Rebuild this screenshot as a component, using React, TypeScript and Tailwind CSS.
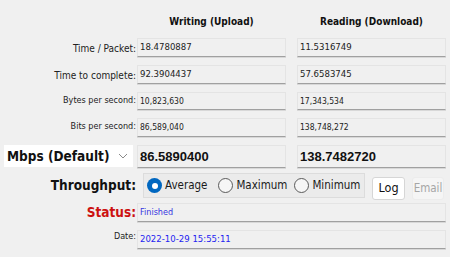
const font = "font-['DejaVu_Sans_Condensed','Liberation_Sans',sans-serif]";

function Field({ children, className = "" }: { children?: React.ReactNode; className?: string }) {
  return (
    <div
      className={`flex items-center w-[149px] h-full bg-[#f0f0f0] border border-[#e4e4e4] border-b-[#a0a0a0] shadow-[0_1px_0_#d8d8d8] pl-[2px] whitespace-nowrap ${className}`}
    >
      {children}
    </div>
  );
}

function Row({
  label,
  a,
  b,
  h,
  small,
}: {
  label: string;
  a: string;
  b: string;
  h: string;
  small?: boolean;
}) {
  const v = small ? "text-[8.5px] text-[#222]" : "text-[9.5px] text-[#222]";
  return (
    <div className={`flex ${h}`}>
      <div className={`w-[137px] text-right pr-[1px] text-[#222] ${small ? "text-[9px] pt-[2px]" : "text-[10px] pt-[3px]"}`}>
        {label}
      </div>
      <Field className={v}>{a}</Field>
      <Field className={`ml-[11px] ${v}`}>{b}</Field>
    </div>
  );
}

function Radio({ label, checked, className = "" }: { label: string; checked?: boolean; className?: string }) {
  return (
    <div className={`flex items-center gap-[3px] ${className}`}>
      {checked ? (
        <div className="w-[15px] h-[15px] rounded-full bg-[#0067c0] flex items-center justify-center">
          <div className="w-[6px] h-[6px] rounded-full bg-white" />
        </div>
      ) : (
        <div className="w-[15px] h-[15px] rounded-full border border-[#5a5a5a] bg-[#f6f6f6]" />
      )}
      <span className="text-[11.5px] text-[#1a1a1a]">{label}</span>
    </div>
  );
}

export default function App() {
  return (
    <div className={`w-[450px] h-[257px] bg-[#f0f0f0] overflow-hidden ${font}`}>
      <div className="flex h-[15px] mt-[14px] text-[10px] font-bold text-[#111]">
        <div className="w-[137px]" />
        <div className="w-[149px] text-center">Writing (Upload)</div>
        <div className="w-[149px] ml-[11px] text-center">Reading (Download)</div>
      </div>

      <div className="flex flex-col mt-[9px] gap-[8px]">
        <Row label="Time / Packet:" a="18.4780887" b="11.5316749" h="h-[19px]" />
        <Row label="Time to complete:" a="92.3904437" b="57.6583745" h="h-[19px]" />
        <Row label="Bytes per second:" a="10,823,630" b="17,343,534" h="h-[18px]" small />
        <Row label="Bits per second:" a="86,589,040" b="138,748,272" h="h-[19px]" small />
      </div>

      <div className="flex h-[23px] mt-[8px]">
        <div className="w-[137px] pl-[4px] pr-[4px]">
          <div className="flex items-center justify-between h-[22px] bg-white pl-[3px] pr-[5px]">
            <span className="text-[13.5px] font-bold text-[#111] whitespace-nowrap">Mbps (Default)</span>
            <svg width="10" height="6" viewBox="0 0 10 6" fill="none">
              <path d="M1 1 L5 5 L9 1" stroke="#8a8a8a" strokeWidth="1" />
            </svg>
          </div>
        </div>
        <Field className="text-[13px] font-bold text-[#111] font-['Liberation_Sans',sans-serif]">86.5890400</Field>
        <Field className="ml-[11px] text-[13px] font-bold text-[#111] font-['Liberation_Sans',sans-serif]">138.7482720</Field>
      </div>

      <div className="flex h-[25px] mt-[5px] items-start">
        <div className="w-[137px] text-right text-[13.5px] font-bold text-[#111] pr-[1px] leading-[25px]">Throughput:</div>
        <div className="flex items-center h-[25px] w-[222px] ml-[6px] pl-[3px] border border-[#dcdcdc] bg-[#ebebeb]">
          <Radio label="Average" checked />
          <Radio label="Maximum" className="ml-[11px]" />
          <Radio label="Minimum" className="ml-[7px]" />
        </div>
        <button className="ml-[7px] mt-[4px] h-[23px] w-[33px] bg-white border border-[#d6d6d6] rounded-[3px] text-[12.5px] text-[#111]">
          Log
        </button>
        <button className="ml-[7px] mt-[4px] h-[23px] w-[32px] bg-[#f5f5f5] border border-[#ececec] rounded-[3px] text-[11.5px] text-[#a6a6a6]">
          Email
        </button>
      </div>

      <div className="flex h-[19px] mt-[5px]">
        <div className="w-[137px] text-right text-[13.5px] font-bold text-[#cc1111] pr-[1px] leading-[19px]">Status:</div>
        <div className="flex items-center w-[309px] h-full bg-[#f0f0f0] border border-[#e4e4e4] border-b-[#a0a0a0] shadow-[0_1px_0_#d8d8d8] pl-[2px] text-[9px] text-[#3535e0]">
          Finished
        </div>
      </div>

      <div className="flex h-[19px] mt-[8px]">
        <div className="w-[137px] text-right text-[9px] text-[#222] pr-[1px]">Date:</div>
        <div className="flex items-center w-[309px] h-full bg-[#f0f0f0] border border-[#e4e4e4] border-b-[#a0a0a0] shadow-[0_1px_0_#d8d8d8] pl-[2px] text-[9.5px] text-[#2323f0]">
          2022-10-29 15:55:11
        </div>
      </div>
    </div>
  );
}
